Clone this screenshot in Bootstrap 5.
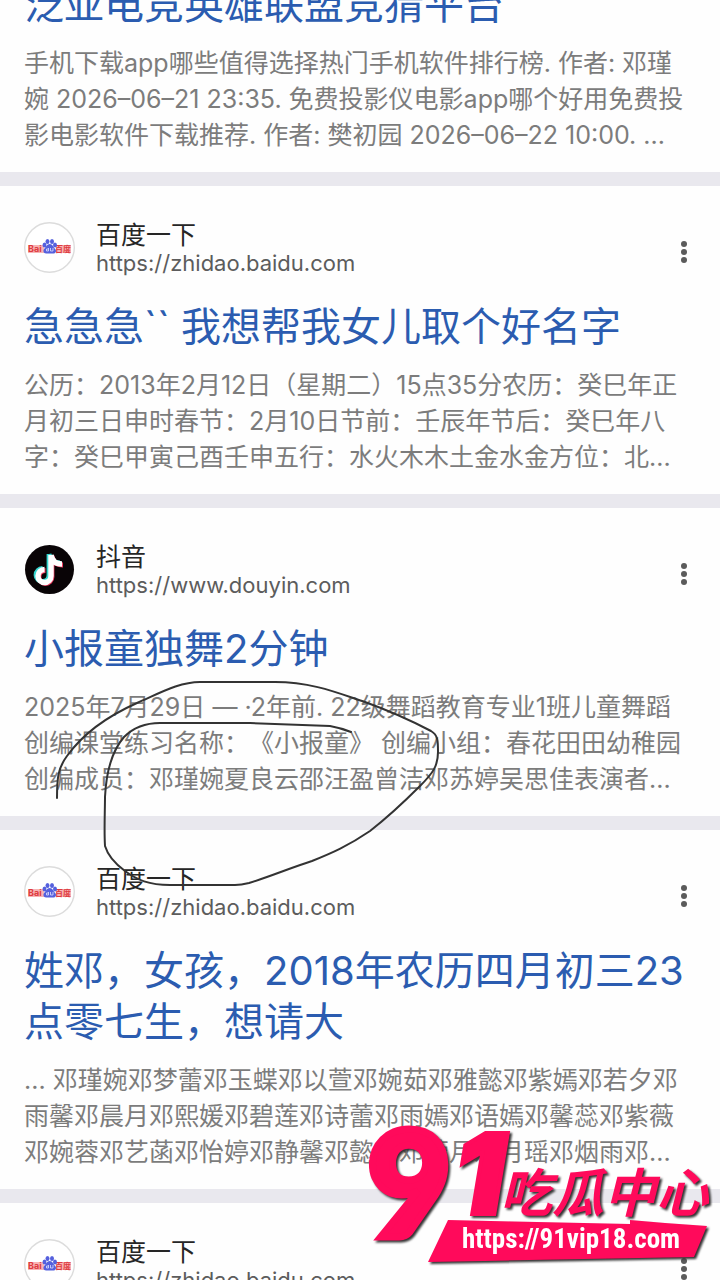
<!DOCTYPE html>
<html lang="zh-CN">
<head>
<meta charset="utf-8">
<meta name="viewport" content="width=device-width, initial-scale=1">
<title>搜索结果</title>
<link href="https://cdn.jsdelivr.net/npm/bootstrap@5.3.0/dist/css/bootstrap.min.css" rel="stylesheet">
<script src="https://cdn.jsdelivr.net/npm/bootstrap@5.3.0/dist/js/bootstrap.bundle.min.js"></script>
<style>
body { font-family: Inter, "Noto Sans CJK SC", sans-serif; background: #e9e8ee; text-spacing-trim: space-all; }
.results { gap: 14px; }
.result { background: #fefefe; padding: 34px 20px 19px 24px; }
.result-first { padding-top: 0; margin-top: -21px; }
.result-head { gap: 21px; margin-bottom: 24px; }
.site-icon { width: 51px; height: 51px; margin-top: 2px; }
.site-name { font-size: 25px; line-height: 30px; color: #262626; }
.site-url { font-size: 22px; line-height: 27px; color: #5c5c5c; }
.more-btn { width: 32px; height: 40px; margin-top: 12px; }
.result-title { font-size: 40px; line-height: 51px; font-weight: 400; margin-bottom: 15px; }
.result-title a { color: #2b5cb0; }
.result-text { font-size: 25px; line-height: 36px; color: #7c7c7c; }
.scribble { left: 50px; top: 674px; width: 400px; height: 220px; }
.watermark { right: 8px; bottom: 12px; width: 344px; height: 144px; overflow: visible; filter: drop-shadow(2px 2px 1px #333); }
</style>
</head>
<body>
<svg class="d-none" aria-hidden="true">
  <symbol id="baidu" viewBox="0 0 51 51">
    <circle cx="25.500" cy="25.500" r="24.800" fill="#fff" stroke="#dcdcdc" stroke-width="1.400"/>
    <g fill="#f8b4b4"><rect x="4" y="23" width="16" height="8"/><rect x="32" y="23" width="15" height="8"/></g>
    <g fill="#de3b40" font-weight="700" font-size="9"><text x="4" y="30">Bai</text><text x="31" y="30" font-size="8">百度</text></g>
    <g fill="#5560dd"><ellipse cx="20.500" cy="23" rx="2" ry="2.600"/><ellipse cx="23.500" cy="19.500" rx="2" ry="2.600"/><ellipse cx="28" cy="19.500" rx="2" ry="2.600"/><ellipse cx="31" cy="23" rx="2" ry="2.600"/><path d="M25.700 22c3 0 3.500 3 5.300 4.700 2 2 .8 4.800-1.500 4.800h-7.500c-2.500 0-3.500-3-1.500-5 1.800-1.600 2.300-4.500 5.200-4.500z"/></g>
    <path d="M24.500 26v3h-2v-2h2M26.500 26v3h2.500v-3" fill="none" stroke="#dfe2ff" stroke-width=".8"/>
  </symbol>
  <symbol id="douyin" viewBox="0 0 51 51">
    <circle cx="25.500" cy="25.500" r="24.500" fill="#090406"/>
    <g fill="none" stroke-width="4.800"><path d="M26 9v21a6.500 6.500 0 1 1-6.500-6.500M26 9c1 6 5 9 11 9" stroke="#35d6cf" transform="translate(-1 1)"/><path d="M26 9v21a6.500 6.500 0 1 1-6.500-6.500M26 9c1 6 5 9 11 9" stroke="#ee3b60" transform="translate(2 3)"/><path d="M26 9v21a6.500 6.500 0 1 1-6.500-6.500M26 9c1 6 5 9 11 9" stroke="#fff" stroke-width="5.400" transform="translate(1 2)"/></g>
  </symbol>
  <symbol id="dots" viewBox="0 0 32 40"><g fill="#5b5b5b"><circle cx="16" cy="12" r="3"/><circle cx="16" cy="20" r="3"/><circle cx="16" cy="28" r="3"/></g></symbol>
</svg>

<main class="position-relative vh-100 overflow-hidden">
  <div class="results d-flex flex-column">
    <article class="result result-first">
      <h2 class="result-title"><a class="text-decoration-none" href="#">泛亚电竞英雄联盟竞猜平台</a></h2>
      <p class="result-text text-nowrap mb-0">手机下载app哪些值得选择热门手机软件排行榜. 作者: 邓瑾<br>婉 2026–06–21 23:35. 免费投影仪电影app哪个好用免费投<br>影电影软件下载推荐. 作者: 樊初园 2026–06–22 10:00. ...</p>
    </article>

    <article class="result">
      <header class="result-head d-flex align-items-start">
        <svg class="site-icon flex-shrink-0" aria-hidden="true"><use href="#baidu"/></svg>
        <div class="flex-grow-1"><div class="site-name">百度一下</div><div class="site-url">https://zhidao.baidu.com</div></div>
        <button class="more-btn btn border-0 p-0" type="button" aria-label="更多"><svg class="d-block w-100 h-100"><use href="#dots"/></svg></button>
      </header>
      <h2 class="result-title"><a class="text-decoration-none" href="#">急急急`` 我想帮我女儿取个好名字</a></h2>
      <p class="result-text text-nowrap mb-0">公历：2013年2月12日（星期二）15点35分农历：癸巳年正<br>月初三日申时春节：2月10日节前：壬辰年节后：癸巳年八<br>字：癸巳甲寅己酉壬申五行：水火木木土金水金方位：北...</p>
    </article>

    <article class="result">
      <header class="result-head d-flex align-items-start">
        <svg class="site-icon flex-shrink-0" aria-hidden="true"><use href="#douyin"/></svg>
        <div class="flex-grow-1"><div class="site-name">抖音</div><div class="site-url">https://www.douyin.com</div></div>
        <button class="more-btn btn border-0 p-0" type="button" aria-label="更多"><svg class="d-block w-100 h-100"><use href="#dots"/></svg></button>
      </header>
      <h2 class="result-title"><a class="text-decoration-none" href="#">小报童独舞2分钟</a></h2>
      <p class="result-text text-nowrap mb-0">2025年7月29日 — ·2年前. 22级舞蹈教育专业1班儿童舞蹈<br>创编课堂练习名称：《小报童》 创编小组：春花田田幼稚园<br>创编成员：邓瑾婉夏良云邵汪盈曾洁邓苏婷吴思佳表演者...</p>
    </article>

    <article class="result">
      <header class="result-head d-flex align-items-start">
        <svg class="site-icon flex-shrink-0" aria-hidden="true"><use href="#baidu"/></svg>
        <div class="flex-grow-1"><div class="site-name">百度一下</div><div class="site-url">https://zhidao.baidu.com</div></div>
        <button class="more-btn btn border-0 p-0" type="button" aria-label="更多"><svg class="d-block w-100 h-100"><use href="#dots"/></svg></button>
      </header>
      <h2 class="result-title"><a class="text-decoration-none" href="#">姓邓，女孩，2018年农历四月初三23<br>点零七生，想请大</a></h2>
      <p class="result-text text-nowrap mb-0">... 邓瑾婉邓梦蕾邓玉蝶邓以萱邓婉茹邓雅懿邓紫嫣邓若夕邓<br>雨馨邓晨月邓熙媛邓碧莲邓诗蕾邓雨嫣邓语嫣邓馨蕊邓紫薇<br>邓婉蓉邓艺菡邓怡婷邓静馨邓懿轩邓菀月邓月瑶邓烟雨邓...</p>
    </article>

    <article class="result">
      <header class="result-head d-flex align-items-start">
        <svg class="site-icon flex-shrink-0" aria-hidden="true"><use href="#baidu"/></svg>
        <div class="flex-grow-1"><div class="site-name">百度一下</div><div class="site-url">https://zhidao.baidu.com</div></div>
        <button class="more-btn btn border-0 p-0" type="button" aria-label="更多"><svg class="d-block w-100 h-100"><use href="#dots"/></svg></button>
      </header>
    </article>
  </div>

  <svg class="scribble position-absolute pe-none" viewBox="50 674 400 220" fill="none" stroke="#333" stroke-width="2" stroke-linecap="round" aria-hidden="true">
    <path d="M57 798C57 778 58 768 67 756C85 731 110 715 137 703C162 692 180 682 200 682H275C312 682 338 693 365 702C390 711 412 721 431 731C438 735 438 741 438 752C438 766 433 773 420 786C402 804 388 817 370 831C348 846 332 853 312 861C290 868 269 877 249 883C245 884 240 885 235 885H170C149 885 137 880 125 871C114 863 108 856 105 846C104 830 105 810 105 797C106 776 111 752 124 737C133 728 146 723 160 723H250L330 726Q341 728 351 732"/>
  </svg>

  <svg class="watermark position-absolute" viewBox="368 1124 344 144">
    <g fill="#ff0a5b">
      <g font-weight="900" stroke="#ff0a5b"><text x="367" y="1237" font-family="Lato, sans-serif" font-size="146" stroke-width="7">9</text><text x="454" y="1214" font-family="Inter, sans-serif" font-style="italic" font-size="112" stroke-width="4">1</text></g>
      <text x="500" y="1212" font-family="'Noto Sans CJK SC', sans-serif" font-weight="700" font-style="italic" font-size="52">吃瓜中心</text>
      <path d="M448 1220L630 1224V1220L665 1223L707 1226L694 1257L428 1262z"/>
    </g>
    <text x="462" y="1248" font-family="'Liberation Sans Narrow', 'Roboto Condensed', 'Open Sans Condensed', Roboto, sans-serif" font-weight="700" font-size="27" fill="#fff">https://91vip18.com</text>
  </svg>
</main>
</body>
</html>
